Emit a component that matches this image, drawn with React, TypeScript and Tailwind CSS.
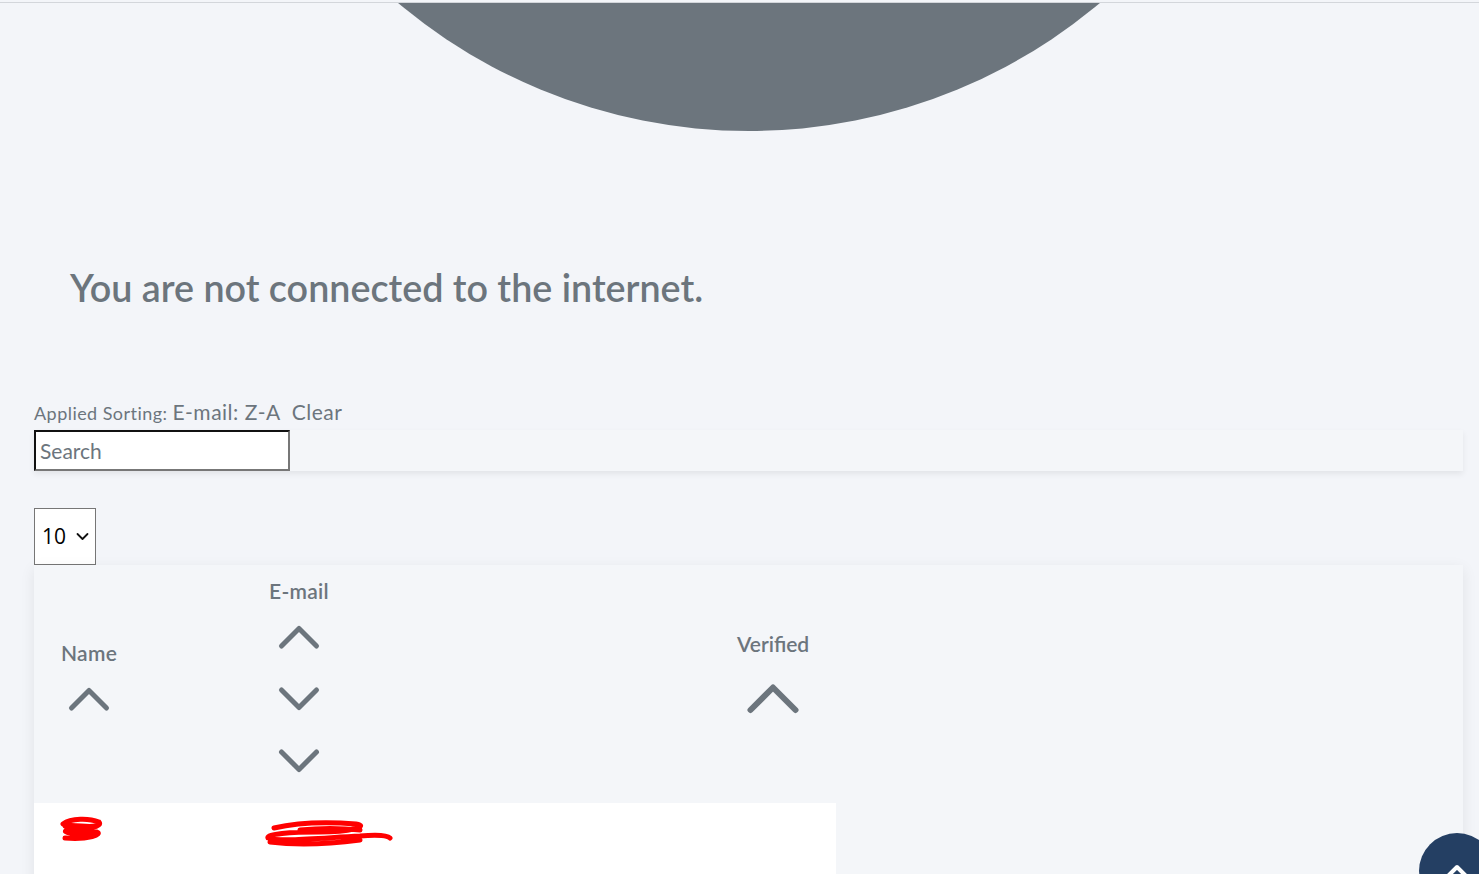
import React from 'react';

const font = { fontFamily: 'Lato, "Noto Sans", sans-serif' };

const Chevron: React.FC<{ dir: 'up' | 'down'; big?: boolean }> = ({ dir, big }) => {
  const w = big ? 56 : 44;
  const h = big ? 32 : 26;
  const s = big ? 6 : 5;
  const d = big
    ? dir === 'up'
      ? 'M5.5 27 L28 4.5 L50.5 27'
      : 'M5.5 5 L28 27.5 L50.5 5'
    : dir === 'up'
      ? 'M4.5 22 L22 4.5 L39.5 22'
      : 'M4.5 4 L22 21.5 L39.5 4';
  return (
    <svg width={w} height={h} viewBox={`0 0 ${w} ${h}`} fill="none">
      <path d={d} stroke="#6c757d" strokeWidth={s} strokeLinecap="round" strokeLinejoin="round" />
    </svg>
  );
};

const HeaderCell: React.FC<{ label: string; chevrons: ('up' | 'down')[]; big?: boolean }> = ({
  label,
  chevrons,
  big,
}) => (
  <div className="inline-flex flex-col items-center">
    <span
      className={`h-[30px] leading-[30px] text-[21px] font-semibold text-[#6c757d] whitespace-nowrap ${
        big ? 'tracking-[0px]' : 'tracking-[0.3px]'
      }`}
    >
      {label}
    </span>
    {chevrons.map((c, i) => (
      <div key={i} className={`flex items-center justify-center ${big ? 'h-[80px]' : 'h-[62px]'}`}>
        <Chevron dir={c} big={big} />
      </div>
    ))}
  </div>
);

export default function App() {
  return (
    <div className="min-h-screen bg-[#f3f5f9] overflow-hidden relative" style={font}>
      {/* top border */}
      <div className="h-[2px]" />
      <div className="h-px bg-[#d3d6db]" />

      {/* avatar placeholder */}
      <div className="h-[128px] overflow-hidden">
        <div className="w-[1090px] h-[1090px] rounded-full bg-[#6c757d] ml-[204px] mt-[-962px]" />
      </div>

      <h1 className="pt-[135px] px-[70px] text-[37.7px] leading-[44px] font-semibold text-[#6c757d]">
        You are not connected to the internet.
      </h1>

      <div className="mt-[90px] ml-[34px] flex items-baseline leading-[24px] text-[#6c757d]">
        <span className="text-[18px] tracking-[0.45px]">Applied Sorting:</span>
        <span className="text-[21px] tracking-[0.5px] ml-[5px]">E-mail: Z-A</span>
        <span className="text-[21px] tracking-[0.5px] ml-[11px]">Clear</span>
      </div>

      <div className="mt-[5px] ml-[34px] w-[1429px] h-[41px] bg-[#f4f6f9] shadow-[0_3px_6px_rgba(0,0,0,0.07)]">
        <input
          placeholder="Search"
          className="w-[256px] h-[41px] bg-white border-2 border-t-[#111] border-l-[#111] border-b-[#777] border-r-[#777] px-[4px] text-[21px] text-[#333] placeholder:text-[#6c757d] outline-none"
          style={font}
        />
      </div>

      <div className="mt-[37px] ml-[34px] w-[62px] h-[57px] bg-white border border-[#767676] flex items-center pl-[7px] gap-[10px]">
        <span className="text-[21px] text-black" style={{ fontFamily: '"Open Sans", sans-serif' }}>
          10
        </span>
        <svg width="13" height="9" viewBox="0 0 13 9" fill="none">
          <path d="M1.5 2 L6.5 7 L11.5 2" stroke="#111" strokeWidth="1.8" strokeLinecap="round" strokeLinejoin="round" />
        </svg>
      </div>

      <div className="ml-[34px] w-[1429px] h-[400px] bg-[#f4f6f9] shadow-[0_4px_14px_rgba(0,0,0,0.08)]">
        <table className="table-fixed w-[802px] border-collapse">
          <colgroup>
            <col className="w-[208px]" />
            <col className="w-[468px]" />
            <col className="w-[126px]" />
          </colgroup>
          <thead>
            <tr>
              <th className="py-[11px] pl-[27px] text-left align-middle">
                <HeaderCell label="Name" chevrons={['up']} />
              </th>
              <th className="py-[11px] pl-[27px] text-left align-middle">
                <HeaderCell label="E-mail" chevrons={['up', 'down', 'down']} />
              </th>
              <th className="py-[11px] pl-[27px] text-left align-middle">
                <HeaderCell label="Verified" chevrons={['up']} big />
              </th>
            </tr>
          </thead>
          <tbody>
            <tr className="bg-white">
              <td className="pl-[25px] pt-[13px] pb-[40px] align-top">
                <svg width="46" height="28" viewBox="0 0 46 28" fill="none">
                  <path
                    d="M4 8 C12 2 30 2 40 6 C44 10 30 14 8 14 C2 16 14 20 38 16 C44 18 30 24 6 22 M6 10 C16 8 28 12 36 10"
                    stroke="#ff0000"
                    strokeWidth="5"
                    strokeLinecap="round"
                  />
                </svg>
              </td>
              <td className="pl-[18px] pt-[15px] pb-[40px] align-top">
                <svg width="134" height="32" viewBox="0 0 134 32" fill="none">
                  <path
                    d="M14 10 C40 4 70 4 96 6 C110 8 90 14 60 14 C30 14 6 16 8 20 C20 24 60 20 100 18 C120 16 128 18 130 20 M10 24 C40 28 70 26 100 22 M40 12 C60 10 80 10 100 12"
                    stroke="#ff0000"
                    strokeWidth="5"
                    strokeLinecap="round"
                  />
                </svg>
              </td>
              <td />
            </tr>
          </tbody>
        </table>
      </div>

      {/* scroll to top */}
      <button className="fixed right-[-16px] bottom-[-35px] w-[76px] h-[76px] rounded-full bg-[#243f63] flex items-center justify-center">
        <svg width="22" height="14" viewBox="0 0 22 14" fill="none">
          <path d="M2 12 L11 3 L20 12" stroke="#fff" strokeWidth="4" strokeLinecap="round" strokeLinejoin="round" />
        </svg>
      </button>
    </div>
  );
}
